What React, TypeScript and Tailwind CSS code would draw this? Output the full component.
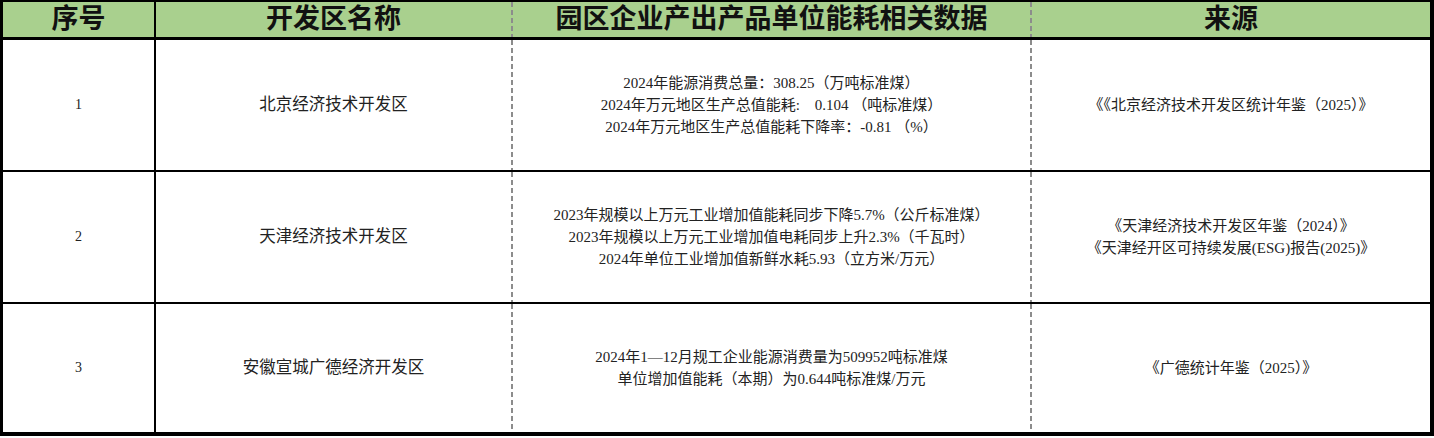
import React from 'react';

const rows = [
  {
    no: '1',
    name: '北京经济技术开发区',
    data: [
      '2024年能源消费总量：308.25（万吨标准煤）',
      '2024年万元地区生产总值能耗:\u00a0\u00a0\u00a0\u00a00.104 （吨标准煤）',
      '2024年万元地区生产总值能耗下降率：-0.81 （%）',
    ],
    source: ['《《北京经济技术开发区统计年鉴（2025）》'],
  },
  {
    no: '2',
    name: '天津经济技术开发区',
    data: [
      '2023年规模以上万元工业增加值能耗同步下降5.7%（公斤标准煤）',
      '2023年规模以上万元工业增加值电耗同步上升2.3%（千瓦时）',
      '2024年单位工业增加值新鲜水耗5.93（立方米/万元）',
    ],
    source: ['《天津经济技术开发区年鉴（2024）》', '《天津经开区可持续发展(ESG)报告(2025)》'],
  },
  {
    no: '3',
    name: '安徽宣城广德经济开发区',
    data: ['2024年1—12月规工企业能源消费量为509952吨标准煤', '单位增加值能耗（本期）为0.644吨标准煤/万元'],
    source: ['《广德统计年鉴（2025）》'],
  },
];

const Dash = () => (
  <div className="w-[2px] shrink-0 self-stretch bg-[repeating-linear-gradient(to_bottom,#8c8c8c_0_5px,transparent_5px_8px)]" />
);

export default function App() {
  return (
    <div className="w-[1434px] h-[438px] bg-white font-['Liberation_Serif','Noto_Sans_CJK_SC',serif]">
      <div className="h-[436px] flex flex-col border-t-2 border-l-[3px] border-r-[4px] border-b-4 border-black">
        {/* header */}
        <div className="h-[38px] flex bg-[#a9d08e] border-b-[3px] border-black text-[27px] font-bold text-[#111] leading-none">
          <div className="w-[153px] shrink-0 border-r-2 border-black flex items-center justify-center">序号</div>
          <div className="w-[355px] shrink-0 flex items-center justify-center">开发区名称</div>
          <Dash />
          <div className="w-[517px] shrink-0 flex items-center justify-center">园区企业产出产品单位能耗相关数据</div>
          <Dash />
          <div className="flex-1 flex items-center justify-center">来源</div>
        </div>

        {rows.map((r, i) => (
          <div
            key={r.no}
            className={`flex text-[15px] text-[#222] leading-[22px] ${i === 2 ? 'h-[128px]' : 'h-[132px] border-b-2 border-black'}`}
          >
            <div className="w-[153px] shrink-0 border-r-2 border-black flex items-center justify-center text-[14px]">{r.no}</div>
            <div className="w-[355px] shrink-0 flex items-center justify-center text-[16.5px]">{r.name}</div>
            <Dash />
            <div className="w-[517px] shrink-0 flex flex-col items-center justify-center">
              {r.data.map((d) => (
                <div key={d} className="whitespace-pre">{d}</div>
              ))}
            </div>
            <Dash />
            <div className="flex-1 flex flex-col items-center justify-center">
              {r.source.map((s) => (
                <div key={s}>{s}</div>
              ))}
            </div>
          </div>
        ))}
      </div>
    </div>
  );
}
